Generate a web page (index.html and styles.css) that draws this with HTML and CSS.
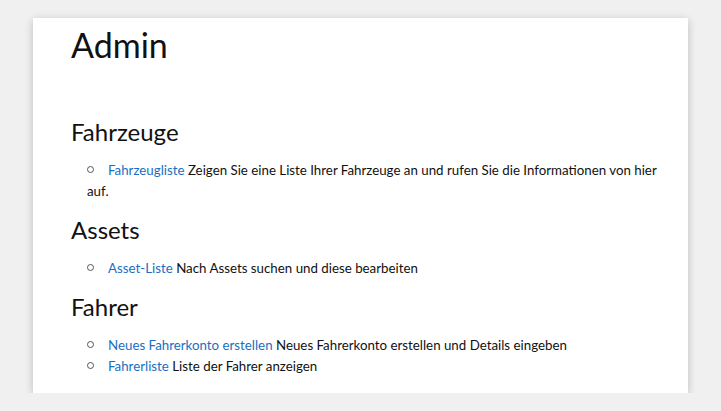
FILE: index.html
```html
<!DOCTYPE html>
<html lang="de">
<head>
    <meta charset="UTF-8">
    <meta name="viewport" content="width=device-width, initial-scale=1.0">
    <title>Admin</title>
    <link rel="stylesheet" href="styles.css">
</head>
<body>
    <div class="admin-panel">
        <h1>Admin</h1>

        <!-- Fahrzeuge -->
        <h2>Fahrzeuge</h2>
        <ul class="link-list">
            <li><a href="#">Fahrzeugliste</a> Zeigen Sie eine Liste Ihrer Fahrzeuge an und rufen Sie die Informationen von hier auf.</li>
        </ul>

        <!-- Assets -->
        <h2>Assets</h2>
        <ul class="link-list">
            <li><a href="#">Asset-Liste</a> Nach Assets suchen und diese bearbeiten</li>
        </ul>

        <!-- Fahrer -->
        <h2>Fahrer</h2>
        <ul class="link-list">
            <li><a href="#">Neues Fahrerkonto erstellen</a> Neues Fahrerkonto erstellen und Details eingeben</li>
            <li><a href="#">Fahrerliste</a> Liste der Fahrer anzeigen</li>
        </ul>
    </div>
</body>
</html>
```

FILE: styles.css
```css
body {
    font-family: Lato, "Open Sans", sans-serif;
    background-color: #f0f0f0;
    margin: 0;
    padding: 18px 0 0 33px;
    color: #111;
}

.admin-panel {
    width: 655px;
    height: 375px;
    box-sizing: border-box;
    padding: 5px 16px 0 38px;
    background: #fff;
    box-shadow: 0 2px 8px rgba(0, 0, 0, 0.22);
}

h1 {
    font-size: 34px;
    font-weight: 400;
    line-height: 44px;
    margin: 0 0 49px;
}

h2 {
    font-size: 24px;
    font-weight: 400;
    line-height: 32px;
    margin: 0 0 12px;
}

.link-list {
    list-style: none;
    margin: 0 0 12px;
    padding: 0 0 0 16px;
    font-size: 13.3px;
    line-height: 21px;
}

.link-list li::before {
    content: "";
    display: inline-block;
    width: 5px;
    height: 5px;
    border: 1px solid #555;
    border-radius: 50%;
    margin: 0 14px 2px 0;
}

.link-list a {
    color: #1b6ec2;
    text-decoration: none;
}
```
